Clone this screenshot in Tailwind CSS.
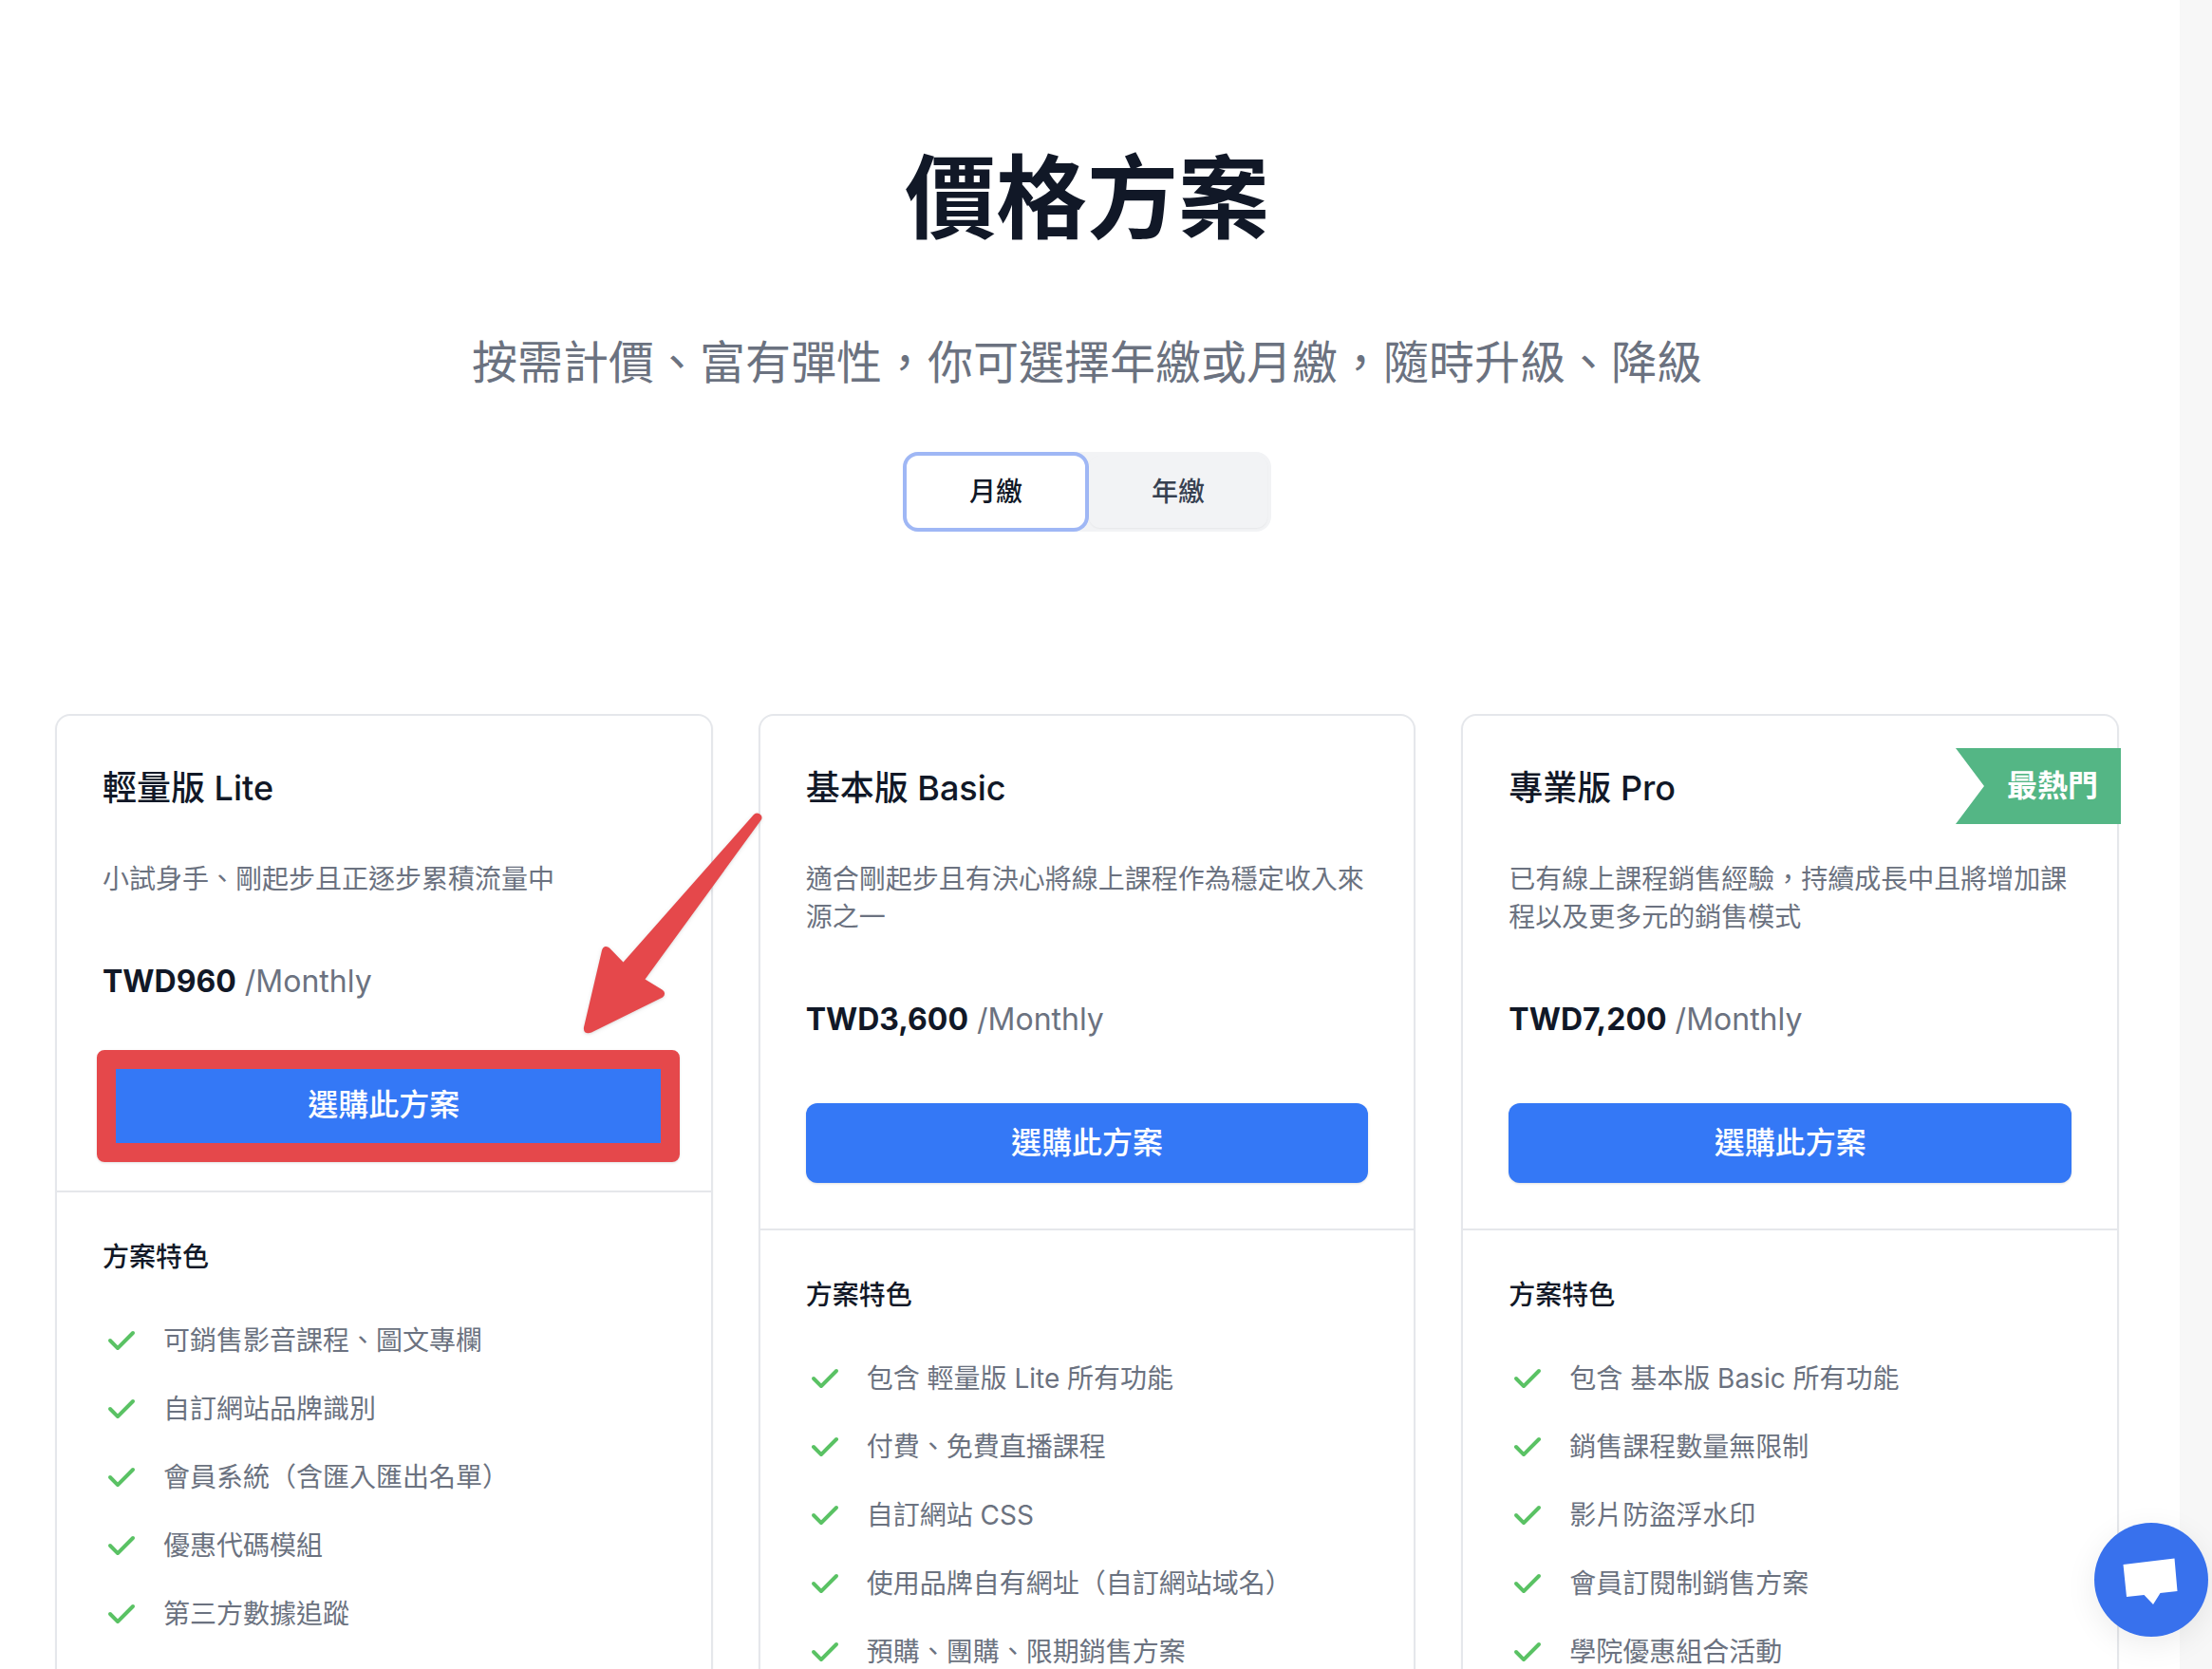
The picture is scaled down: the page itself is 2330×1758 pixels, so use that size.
<!DOCTYPE html>
<html lang="zh-Hant">
<head>
  <meta charset="UTF-8" />
  <meta name="viewport" content="width=device-width, initial-scale=1.0" />
  <title>價格方案</title>
  <script src="https://cdn.jsdelivr.net/npm/@tailwindcss/browser@4"></script>
</head>
<body class="flex h-screen overflow-hidden bg-white font-[Inter,'Noto_Sans_CJK_TC',sans-serif] text-[#111827]">
  <!-- Main content -->
  <main class="flex-1 pl-[58px] pr-16 pt-40">
    <!-- Heading -->
    <header class="flex flex-col items-center text-center">
      <h1 class="text-8xl font-bold leading-[96px]">價格方案</h1>
      <p class="mt-[94px] text-5xl leading-[64px] text-[#6b7280]">按需計價、富有彈性，你可選擇年繳或月繳，隨時升級、降級</p>

      <!-- Billing toggle -->
      <div class="mt-[62px] flex gap-1 rounded-2xl bg-[#f2f3f5] p-1 text-[28px] font-medium leading-10">
        <button type="button" class="rounded-xl border-2 border-white bg-white px-16 py-4 ring-4 ring-[#9fb7f5]">月繳</button>
        <button type="button" class="rounded-xl border-2 border-transparent px-16 py-4 text-[#374151] shadow-xs">年繳</button>
      </div>
    </header>

    <!-- Plans -->
    <div class="mt-48 grid grid-cols-3 items-start gap-12">
      <!-- Lite -->
      <section class="rounded-2xl border-2 border-[#e5e7eb] shadow-xs">
        <div class="p-12">
          <h2 class="text-4xl font-medium leading-[56px]">輕量版 Lite</h2>
          <p class="mt-12 text-[28px] leading-10 text-[#6b7280]">小試身手、剛起步且正逐步累積流量中</p>
          <p class="mt-16 text-[32px] leading-[48px] text-[#6b7280]"><span class="font-bold text-[#111827]">TWD960</span> /Monthly</p>
          <div class="relative mt-16">
            <button type="button" class="block w-full rounded-xl bg-[#3478f6] py-[18px] text-[32px] font-medium leading-[48px] text-white shadow-sm">選購此方案</button>
            <!-- Highlight frame and arrow -->
            <div class="pointer-events-none absolute -bottom-[18px] -left-1.5 -right-[15px] -top-4 rounded-lg border-20 border-[#e5484b] shadow"></div>
            <svg class="pointer-events-none absolute -right-[109px] bottom-[110px] z-10 h-[244px] w-[200px] drop-shadow" viewBox="610 852 200 244" fill="#e5484b" aria-hidden="true">
              <path d="M794 858 L656.5 1013.5 L642 998.5 Q640 996.500 637.5 997 Q635 997.500 634 1001 L615 1082 Q614.500 1086 616.5 1087.500 Q619 1089 623 1087.500 L698 1050.500 Q700.500 1048.500 700 1046 Q700 1044 697.500 1042.500 L679.500 1031.500 L801.500 864 Q803.500 861 801.500 858.500 Q798 855 794 858 Z" />
            </svg>
          </div>
        </div>
        <div class="border-t-2 border-[#e5e7eb] px-12 pb-16 pt-12 text-[28px] leading-10">
          <h3 class="font-medium">方案特色</h3>
          <ul class="mt-12 space-y-8 text-[#6b7280]">
            <li class="flex gap-6"><svg class="size-10 shrink-0 text-[#5ac264]" viewBox="0 0 20 20" fill="currentColor" aria-hidden="true"><path d="M16.707 5.293a1 1 0 010 1.414l-8 8a1 1 0 01-1.414 0l-4-4a1 1 0 011.414-1.414L8 12.586l7.293-7.293a1 1 0 011.414 0z" /></svg>可銷售影音課程、圖文專欄</li>
            <li class="flex gap-6"><svg class="size-10 shrink-0 text-[#5ac264]" viewBox="0 0 20 20" fill="currentColor" aria-hidden="true"><path d="M16.707 5.293a1 1 0 010 1.414l-8 8a1 1 0 01-1.414 0l-4-4a1 1 0 011.414-1.414L8 12.586l7.293-7.293a1 1 0 011.414 0z" /></svg>自訂網站品牌識別</li>
            <li class="flex gap-6"><svg class="size-10 shrink-0 text-[#5ac264]" viewBox="0 0 20 20" fill="currentColor" aria-hidden="true"><path d="M16.707 5.293a1 1 0 010 1.414l-8 8a1 1 0 01-1.414 0l-4-4a1 1 0 011.414-1.414L8 12.586l7.293-7.293a1 1 0 011.414 0z" /></svg>會員系統（含匯入匯出名單）</li>
            <li class="flex gap-6"><svg class="size-10 shrink-0 text-[#5ac264]" viewBox="0 0 20 20" fill="currentColor" aria-hidden="true"><path d="M16.707 5.293a1 1 0 010 1.414l-8 8a1 1 0 01-1.414 0l-4-4a1 1 0 011.414-1.414L8 12.586l7.293-7.293a1 1 0 011.414 0z" /></svg>優惠代碼模組</li>
            <li class="flex gap-6"><svg class="size-10 shrink-0 text-[#5ac264]" viewBox="0 0 20 20" fill="currentColor" aria-hidden="true"><path d="M16.707 5.293a1 1 0 010 1.414l-8 8a1 1 0 01-1.414 0l-4-4a1 1 0 011.414-1.414L8 12.586l7.293-7.293a1 1 0 011.414 0z" /></svg>第三方數據追蹤</li>
          </ul>
        </div>
      </section>

      <!-- Basic -->
      <section class="rounded-2xl border-2 border-[#e5e7eb] shadow-xs">
        <div class="p-12">
          <h2 class="text-4xl font-medium leading-[56px]">基本版 Basic</h2>
          <p class="mt-12 text-[28px] leading-10 text-[#6b7280]">適合剛起步且有決心將線上課程作為穩定收入來源之一</p>
          <p class="mt-16 text-[32px] leading-[48px] text-[#6b7280]"><span class="font-bold text-[#111827]">TWD3,600</span> /Monthly</p>
          <button type="button" class="mt-16 block w-full rounded-xl bg-[#3478f6] py-[18px] text-[32px] font-medium leading-[48px] text-white shadow-sm">選購此方案</button>
        </div>
        <div class="border-t-2 border-[#e5e7eb] px-12 pb-16 pt-12 text-[28px] leading-10">
          <h3 class="font-medium">方案特色</h3>
          <ul class="mt-12 space-y-8 text-[#6b7280]">
            <li class="flex gap-6"><svg class="size-10 shrink-0 text-[#5ac264]" viewBox="0 0 20 20" fill="currentColor" aria-hidden="true"><path d="M16.707 5.293a1 1 0 010 1.414l-8 8a1 1 0 01-1.414 0l-4-4a1 1 0 011.414-1.414L8 12.586l7.293-7.293a1 1 0 011.414 0z" /></svg>包含 輕量版 Lite 所有功能</li>
            <li class="flex gap-6"><svg class="size-10 shrink-0 text-[#5ac264]" viewBox="0 0 20 20" fill="currentColor" aria-hidden="true"><path d="M16.707 5.293a1 1 0 010 1.414l-8 8a1 1 0 01-1.414 0l-4-4a1 1 0 011.414-1.414L8 12.586l7.293-7.293a1 1 0 011.414 0z" /></svg>付費、免費直播課程</li>
            <li class="flex gap-6"><svg class="size-10 shrink-0 text-[#5ac264]" viewBox="0 0 20 20" fill="currentColor" aria-hidden="true"><path d="M16.707 5.293a1 1 0 010 1.414l-8 8a1 1 0 01-1.414 0l-4-4a1 1 0 011.414-1.414L8 12.586l7.293-7.293a1 1 0 011.414 0z" /></svg>自訂網站 CSS</li>
            <li class="flex gap-6"><svg class="size-10 shrink-0 text-[#5ac264]" viewBox="0 0 20 20" fill="currentColor" aria-hidden="true"><path d="M16.707 5.293a1 1 0 010 1.414l-8 8a1 1 0 01-1.414 0l-4-4a1 1 0 011.414-1.414L8 12.586l7.293-7.293a1 1 0 011.414 0z" /></svg>使用品牌自有網址（自訂網站域名）</li>
            <li class="flex gap-6"><svg class="size-10 shrink-0 text-[#5ac264]" viewBox="0 0 20 20" fill="currentColor" aria-hidden="true"><path d="M16.707 5.293a1 1 0 010 1.414l-8 8a1 1 0 01-1.414 0l-4-4a1 1 0 011.414-1.414L8 12.586l7.293-7.293a1 1 0 011.414 0z" /></svg>預購、團購、限期銷售方案</li>
          </ul>
        </div>
      </section>

      <!-- Pro -->
      <section class="relative rounded-2xl border-2 border-[#e5e7eb] shadow-xs">
        <div class="absolute -right-1 top-[34px] bg-[#54b685] py-4 pl-[54px] pr-6 text-[32px] font-bold leading-[48px] text-white [clip-path:polygon(0_0,100%_0,100%_100%,0_100%,30px_50%)]">最熱門</div>
        <div class="p-12">
          <h2 class="text-4xl font-medium leading-[56px]">專業版 Pro</h2>
          <p class="mt-12 text-[28px] leading-10 text-[#6b7280]">已有線上課程銷售經驗，持續成長中且將增加課程以及更多元的銷售模式</p>
          <p class="mt-16 text-[32px] leading-[48px] text-[#6b7280]"><span class="font-bold text-[#111827]">TWD7,200</span> /Monthly</p>
          <button type="button" class="mt-16 block w-full rounded-xl bg-[#3478f6] py-[18px] text-[32px] font-medium leading-[48px] text-white shadow-sm">選購此方案</button>
        </div>
        <div class="border-t-2 border-[#e5e7eb] px-12 pb-16 pt-12 text-[28px] leading-10">
          <h3 class="font-medium">方案特色</h3>
          <ul class="mt-12 space-y-8 text-[#6b7280]">
            <li class="flex gap-6"><svg class="size-10 shrink-0 text-[#5ac264]" viewBox="0 0 20 20" fill="currentColor" aria-hidden="true"><path d="M16.707 5.293a1 1 0 010 1.414l-8 8a1 1 0 01-1.414 0l-4-4a1 1 0 011.414-1.414L8 12.586l7.293-7.293a1 1 0 011.414 0z" /></svg>包含 基本版 Basic 所有功能</li>
            <li class="flex gap-6"><svg class="size-10 shrink-0 text-[#5ac264]" viewBox="0 0 20 20" fill="currentColor" aria-hidden="true"><path d="M16.707 5.293a1 1 0 010 1.414l-8 8a1 1 0 01-1.414 0l-4-4a1 1 0 011.414-1.414L8 12.586l7.293-7.293a1 1 0 011.414 0z" /></svg>銷售課程數量無限制</li>
            <li class="flex gap-6"><svg class="size-10 shrink-0 text-[#5ac264]" viewBox="0 0 20 20" fill="currentColor" aria-hidden="true"><path d="M16.707 5.293a1 1 0 010 1.414l-8 8a1 1 0 01-1.414 0l-4-4a1 1 0 011.414-1.414L8 12.586l7.293-7.293a1 1 0 011.414 0z" /></svg>影片防盜浮水印</li>
            <li class="flex gap-6"><svg class="size-10 shrink-0 text-[#5ac264]" viewBox="0 0 20 20" fill="currentColor" aria-hidden="true"><path d="M16.707 5.293a1 1 0 010 1.414l-8 8a1 1 0 01-1.414 0l-4-4a1 1 0 011.414-1.414L8 12.586l7.293-7.293a1 1 0 011.414 0z" /></svg>會員訂閱制銷售方案</li>
            <li class="flex gap-6"><svg class="size-10 shrink-0 text-[#5ac264]" viewBox="0 0 20 20" fill="currentColor" aria-hidden="true"><path d="M16.707 5.293a1 1 0 010 1.414l-8 8a1 1 0 01-1.414 0l-4-4a1 1 0 011.414-1.414L8 12.586l7.293-7.293a1 1 0 011.414 0z" /></svg>學院優惠組合活動</li>
          </ul>
        </div>
      </section>
    </div>
  </main>

  <!-- Right gutter -->
  <div class="w-[34px] shrink-0 bg-[#f7f7f7]"></div>

  <!-- Chat button -->
  <button type="button" aria-label="Chat" class="fixed bottom-[34px] right-1 size-[120px] rounded-full bg-[#3871ed] shadow-[0_8px_32px_rgba(0,0,0,0.08)]">
    <svg viewBox="0 0 120 120" fill="#fff" class="size-full" aria-hidden="true">
      <path d="M30.5 44 L84.5 37.5 L87.5 72 L69.5 74 L62 86 L52.5 76 L34 78 Z" />
    </svg>
  </button>
</body>
</html>
